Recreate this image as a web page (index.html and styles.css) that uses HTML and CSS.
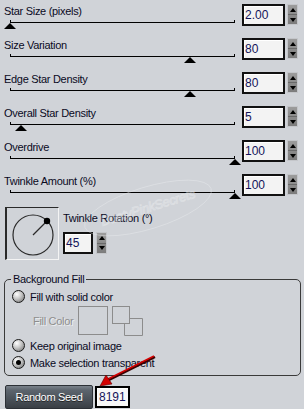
FILE: index.html
```html
<!DOCTYPE html>
<html lang="en">
<head>
    <meta charset="UTF-8">
    <title>Star Twinkle</title>
    <link rel="stylesheet" href="styles.css">
</head>
<body>
    <div class="dialog">
        <!-- Sliders -->
        <div class="row">
            <div class="slider-col">
                <div class="label">Star Size (pixels)</div>
                <div class="track"><span class="thumb" style="left:0%"></span></div>
            </div>
            <div class="spin">
                <div class="field">2.00</div>
                <div class="arrows"><span class="up"></span><span class="down"></span></div>
            </div>
        </div>
        <div class="row">
            <div class="slider-col">
                <div class="label">Size Variation</div>
                <div class="track"><span class="thumb" style="left:80%"></span></div>
            </div>
            <div class="spin">
                <div class="field">80</div>
                <div class="arrows"><span class="up"></span><span class="down"></span></div>
            </div>
        </div>
        <div class="row">
            <div class="slider-col">
                <div class="label">Edge Star Density</div>
                <div class="track"><span class="thumb" style="left:80%"></span></div>
            </div>
            <div class="spin">
                <div class="field">80</div>
                <div class="arrows"><span class="up"></span><span class="down"></span></div>
            </div>
        </div>
        <div class="row">
            <div class="slider-col">
                <div class="label">Overall Star Density</div>
                <div class="track"><span class="thumb" style="left:5%"></span></div>
            </div>
            <div class="spin">
                <div class="field">5</div>
                <div class="arrows"><span class="up"></span><span class="down"></span></div>
            </div>
        </div>
        <div class="row">
            <div class="slider-col">
                <div class="label">Overdrive</div>
                <div class="track"><span class="thumb" style="left:100%"></span></div>
            </div>
            <div class="spin">
                <div class="field">100</div>
                <div class="arrows"><span class="up"></span><span class="down"></span></div>
            </div>
        </div>
        <div class="row">
            <div class="slider-col">
                <div class="label">Twinkle Amount (%)</div>
                <div class="track"><span class="thumb" style="left:100%"></span></div>
            </div>
            <div class="spin">
                <div class="field">100</div>
                <div class="arrows"><span class="up"></span><span class="down"></span></div>
            </div>
        </div>

        <!-- Rotation dial -->
        <div class="rotation">
            <div class="dial">
                <svg width="51" height="51" viewBox="0 0 51 51">
                    <circle cx="26" cy="27" r="20" fill="none" stroke="#2a2a2a" stroke-width="1.2"/>
                    <line x1="26" y1="27" x2="40" y2="13" stroke="#2a2a2a" stroke-width="1.2"/>
                    <circle cx="40" cy="13" r="3.2" fill="#000"/>
                </svg>
            </div>
            <div class="rot-side">
                <div class="label">Twinkle Rotation (°)</div>
                <div class="spin small">
                    <div class="field">45</div>
                    <div class="arrows"><span class="up"></span><span class="down"></span></div>
                </div>
            </div>
        </div>

        <!-- Background fill -->
        <fieldset class="group">
            <legend>Background Fill</legend>
            <div class="radio"><span class="dot"></span>Fill with solid color</div>
            <div class="color-row">
                <span class="muted">Fill Color</span>
                <span class="swatch"></span>
                <svg class="swap" width="32" height="31" viewBox="0 0 32 31">
                    <rect x="0.5" y="0.5" width="17" height="17" fill="none" stroke="#8c8c8c"/>
                    <path d="M12.5 17.5 V29.5 H30.5 V12.5 H17.5" fill="none" stroke="#8c8c8c"/>
                </svg>
            </div>
            <div class="radio"><span class="dot"></span>Keep original image</div>
            <div class="radio"><span class="dot on"></span>Make selection transparent</div>
        </fieldset>

        <div class="seed-row">
            <button class="seed-btn">Random Seed</button>
            <div class="seed">8191</div>
        </div>
    </div>

    <!-- watermark and red pointer drawn over the dialog -->
    <svg class="overlay" width="304" height="409" viewBox="0 0 304 409">
        <g class="mark" transform="rotate(-17 148 208)" fill="none" stroke="#eef0f2" stroke-width="0.8">
            <ellipse cx="148" cy="208" rx="66" ry="21"/>
            <text x="148" y="212" text-anchor="middle" font-family="Liberation Sans, sans-serif" font-size="13" font-style="italic">DustyPinkSecrets</text>
        </g>
        <line x1="155" y1="357" x2="107" y2="381" stroke="#3a0000" stroke-width="2.2"/>
        <line x1="154" y1="356" x2="106" y2="380" stroke="#d40000" stroke-width="1.4"/>
        <polygon points="100,386 106,375 112,384" fill="#d40000" stroke="#5a0000" stroke-width="0.6"/>
    </svg>
</body>
</html>
```

FILE: styles.css
```css
body { margin: 0; background: #d0d3d8; font-family: "Liberation Sans", Arial, sans-serif; font-size: 11px; letter-spacing: -0.3px; color: #0a0a1e; width: 304px; height: 409px; overflow: hidden; position: relative; }
.dialog { padding: 4px 0 0 4px; }
.row { display: flex; height: 34px; }
.slider-col { width: 238px; }
.label { height: 14px; line-height: 14px; white-space: nowrap; }
.track { position: relative; margin: 4px 0 0 6px; width: 225px; height: 1px; background: #000; }
.track::before, .track::after { content: ""; position: absolute; top: -2px; width: 1px; height: 3px; background: #000; }
.track::before { left: 0; }
.track::after { right: 0; }
.thumb { position: absolute; top: 1px; margin-left: -6px; width: 0; height: 0; border-left: 6px solid transparent; border-right: 6px solid transparent; border-bottom: 6px solid #000; }

.spin { display: flex; align-items: flex-start; }
.field { box-sizing: border-box; width: 43px; height: 22px; border: 2px solid #111; background: #f3f3f3; font-size: 12px; letter-spacing: 0; line-height: 18px; padding-left: 1px; color: #14145a; box-shadow: inset 1px 1px 0 #fff; }
.arrows { box-sizing: border-box; margin-left: 2px; width: 11px; height: 21px; display: flex; flex-direction: column; border: 1px solid #c4c6ca; background: linear-gradient(#9c9c9c, #7c7c7c); }
.arrows span { flex: 1; display: flex; align-items: center; justify-content: center; }
.arrows .up { border-bottom: 1px solid #6a6a6a; }
.arrows .up::after { content: ""; border-left: 3px solid transparent; border-right: 3px solid transparent; border-bottom: 4px solid #000; }
.arrows .down::after { content: ""; border-left: 3px solid transparent; border-right: 3px solid transparent; border-top: 4px solid #000; }

.rotation { display: flex; margin-top: -1px; padding-left: 1px; }
.dial { box-sizing: border-box; width: 54px; height: 53px; border-top: 1px solid #2a2a2a; border-left: 2px solid #2a2a2a; border-right: 1px solid #f4f4f4; border-bottom: 1px solid #f4f4f4; }
.dial svg { display: block; }
.rot-side { margin-left: 4px; padding-top: 4px; }
.rot-side .label { margin-bottom: 7px; }
.small .field { width: 30px; }
.small .arrows { margin-left: 3px; height: 22px; }

.group { margin: 12px 3px 0 0; padding: 2px 6px 4px; border: 1px solid #3a3a3a; border-radius: 5px; }
.group legend { padding: 0 2px; height: 14px; line-height: 14px; }
.radio { display: flex; align-items: center; height: 17px; }
.dot { box-sizing: border-box; width: 13px; height: 13px; margin: 0 5px 0 1px; border: 1px solid #1a1a1a; border-radius: 50%; background: radial-gradient(circle at 35% 30%, #ffffff 0%, #c4c4c4 45%, #6a6a6a 100%); display: flex; align-items: center; justify-content: center; }
.dot.on::after { content: ""; width: 5px; height: 5px; border-radius: 50%; background: #000; }
.color-row { display: flex; align-items: flex-start; height: 32px; padding-left: 22px; }
.muted { color: #8e8e8e; text-shadow: 1px 1px 0 #eceef0; margin-top: 10px; }
.swatch { box-sizing: border-box; width: 30px; height: 29px; margin: 1px 0 0 5px; border: 1px solid #8c8c8c; }
.swap { margin: 1px 0 0 4px; }

.seed-row { display: flex; align-items: flex-start; margin-top: 9px; padding-left: 1px; }
.seed-btn { box-sizing: border-box; width: 88px; height: 24px; padding: 0; border: 1px solid #2c3036; border-radius: 2px; background: linear-gradient(#7a828b 0%, #5c646d 20%, #4c535b 55%, #3a3f45 100%); color: #fff; font-family: "Liberation Sans", Arial, sans-serif; font-size: 11px; letter-spacing: -0.3px; text-shadow: 0 1px 0 #222; }
.seed { box-sizing: border-box; width: 35px; height: 22px; margin: 1px 0 0 2px; border: 2px solid #000; background: #f8f8f8; box-shadow: inset 1px 1px 0 #fff; font-size: 12px; letter-spacing: 0; line-height: 18px; padding-left: 2px; color: #14145a; }

.overlay { position: absolute; left: 0; top: 0; pointer-events: none; }
.mark { opacity: 0.45; }
```
